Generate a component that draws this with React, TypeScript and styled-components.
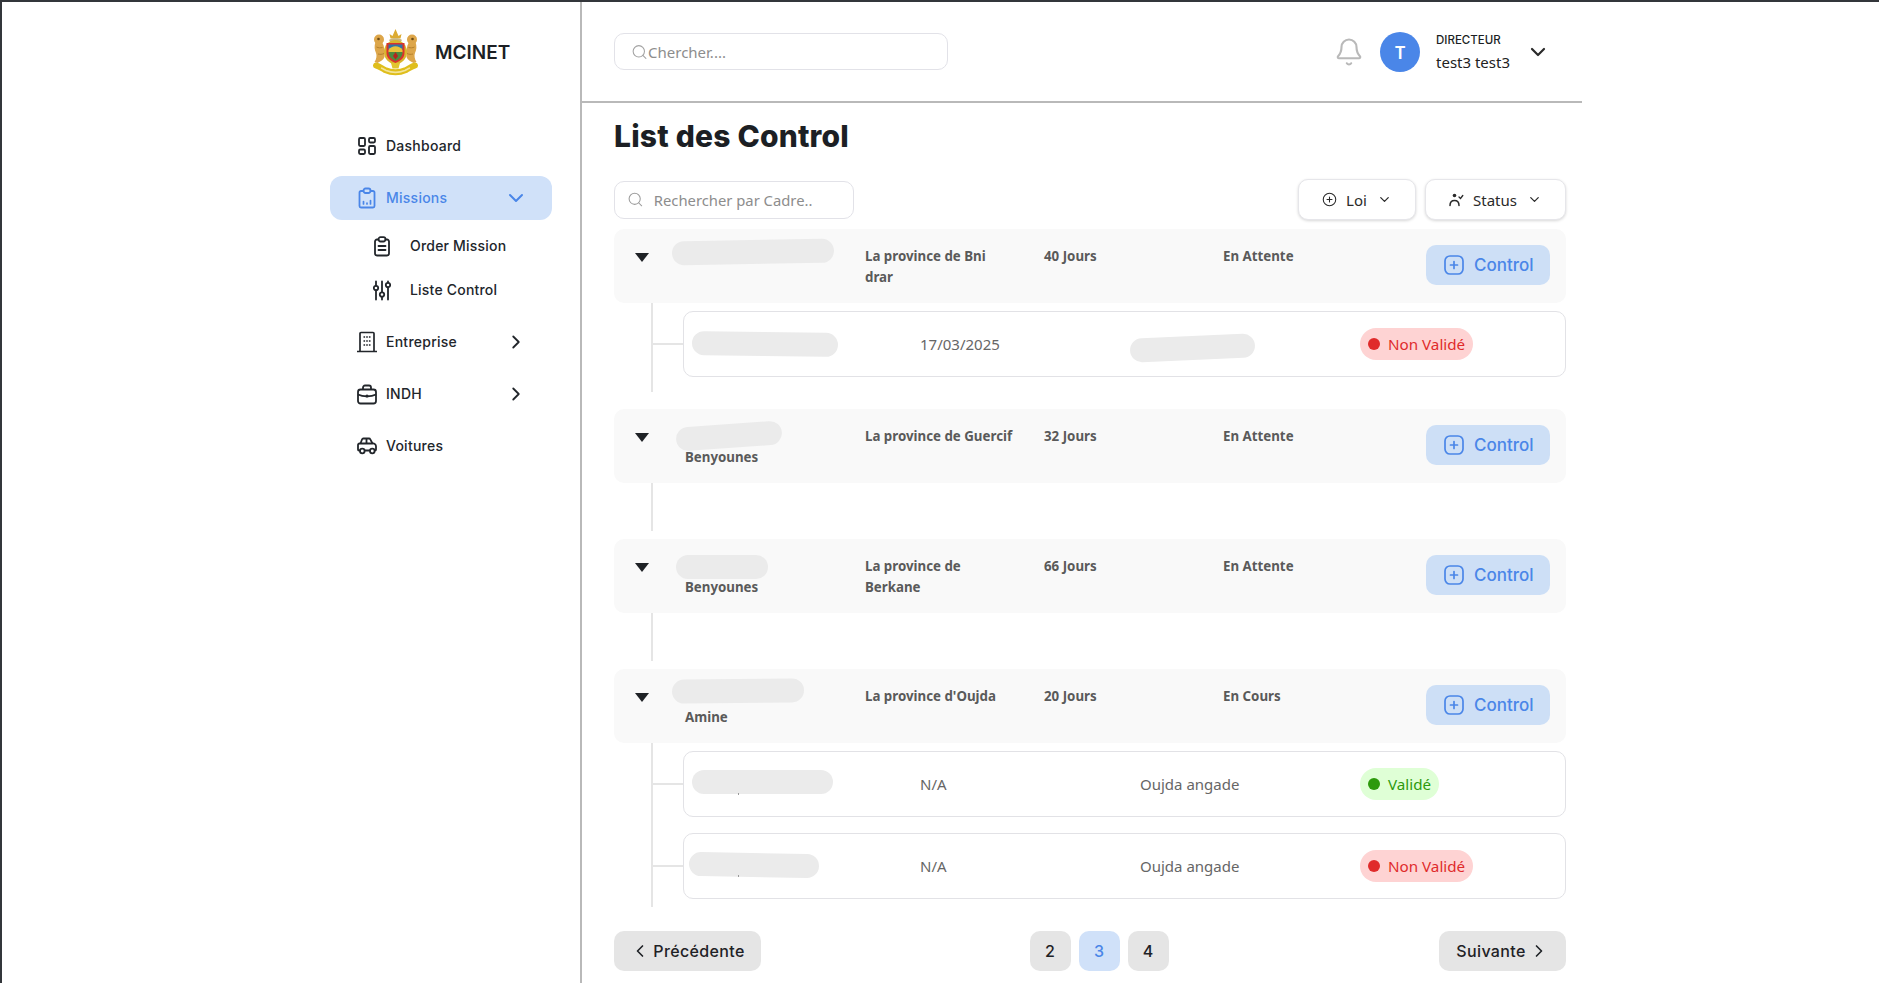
import React from "react";
import styled, { createGlobalStyle } from "styled-components";
import { Bell, ChevronDown, ChevronLeft, ChevronRight, CirclePlus, Search } from "lucide-react";

interface BlurSpot {
  left: number;
  top: number;
  width: number;
  height?: number;
  rotate: number;
}

interface ControlItem {
  blur: BlurSpot;
  date: string;
  place?: string;
  placeBlur?: BlurSpot;
  valid: boolean;
  tick?: boolean;
}

interface MissionItem {
  blur: BlurSpot;
  name?: string;
  province: string;
  days: string;
  status: string;
  tail: number;
  after: number;
  controls: ControlItem[];
}

const missions: MissionItem[] = [
  {
    blur: { left: 0, top: -5, width: 162, rotate: -1 },
    province: "La province de Bni drar",
    days: "40 Jours",
    status: "En Attente",
    tail: 15,
    after: 17,
    controls: [
      {
        blur: { left: 8, top: 20, width: 146, rotate: 0.8 },
        date: "17/03/2025",
        placeBlur: { left: -10, top: 24, width: 125, rotate: -2.5 },
        valid: false,
      },
    ],
  },
  {
    blur: { left: 4, top: -1, width: 106, rotate: -4 },
    name: "Benyounes",
    province: "La province de Guercif",
    days: "32 Jours",
    status: "En Attente",
    tail: 40,
    after: 8,
    controls: [],
  },
  {
    blur: { left: 4, top: 0, width: 92, rotate: 0 },
    name: "Benyounes",
    province: "La province de Berkane",
    days: "66 Jours",
    status: "En Attente",
    tail: 40,
    after: 8,
    controls: [],
  },
  {
    blur: { left: 0, top: -6, width: 132, rotate: -0.6 },
    name: "Amine",
    province: "La province d'Oujda",
    days: "20 Jours",
    status: "En Cours",
    tail: 8,
    after: 24,
    controls: [
      { blur: { left: 8, top: 18, width: 141, rotate: 0 }, date: "N/A", place: "Oujda angade", valid: true, tick: true },
      { blur: { left: 5, top: 19, width: 130, rotate: 1 }, date: "N/A", place: "Oujda angade", valid: false, tick: true },
    ],
  },
];

function Logo() {
  return (
    <svg width="47" height="50" viewBox="0 0 47 50">
      {/* crown */}
      <path d="M18.500 11.500l-1-4.500 3 2 3-7 3 7 3-2-1 4.500z" fill="#dcab32" />
      <path d="M17 13c2-2.500 11-2.500 13 0l-1.500 2.500h-10z" fill="#c9b57f" />
      {/* lions */}
      <g fill="#dda64a">
        <circle cx="7" cy="12.500" r="5" />
        <path d="M3.500 15c-1.500 4-1 8 .5 11 1 2.500 .5 6-1.500 9l3 1c3-1.500 6-3 7-6 .5-5 0-11-2.500-15z" />
        <circle cx="40" cy="12.500" r="5" />
        <path d="M43.500 15c1.500 4 1 8-.5 11-1 2.500-.5 6 1.500 9l-3 1c-3-1.500-6-3-7-6-.5-5 0-11 2.500-15z" />
      </g>
      <path d="M4.500 20c2 1 4 1 6 .5M6 27c2 .5 4 .5 6-.5M42.500 20c-2 1-4 1-6 .5M41 27c-2 .5-4 .5-6-.5" stroke="#b5802c" strokeWidth="1" fill="none" />
      <circle cx="6.500" cy="12" r="1.300" fill="#6b4a15" />
      <circle cx="40.500" cy="12" r="1.300" fill="#6b4a15" />
      {/* shield */}
      <ellipse cx="23.500" cy="25" rx="11.500" ry="12" fill="#d9b52e" />
      <path d="M14.500 16h18v10c0 6-5 8-9 10-4-2-9-4-9-10z" fill="#d9332c" />
      <path d="M16.500 17.500h14v5h-14z" fill="#2f76a8" />
      <path d="M16.500 23c3-5 11-5 14 0v2.500h-14z" fill="#e8c23a" />
      <path d="M16.500 25h14c0 5-3 7-7 9-4-2-7-4-7-9z" fill="#4d8a3f" />
      <path d="M23.500 25l2.500 4-2.500 3.500-2.500-3.500z" fill="#b5221e" />
      {/* ribbon */}
      <path d="M4 38.500c3 .5 6 3 9 4.500 7 3 14 3 21 0 3-1.500 6-4 9-4.500" stroke="#dfbe1c" strokeWidth="6" fill="none" strokeLinecap="round" />
      <path d="M9 41c2 .5 3 1.500 5 2.500 6.500 2.500 12.500 2.500 19 0 2-1 3-2 5-2.500" stroke="#f3e49a" strokeWidth="1.600" fill="none" />
      <path d="M19 36h9l-1.500 5.500h-6z" fill="#e2c52e" />
    </svg>
  );
}

function DashboardIcon() {
  return (
    <svg width="20" height="20" viewBox="0 0 20 20" fill="none" stroke="currentColor" strokeWidth="1.800" strokeLinejoin="round">
      <rect x="2" y="2" width="6" height="8" rx="1.200" />
      <rect x="12" y="2" width="6" height="4.500" rx="1.200" />
      <rect x="2" y="13.500" width="6" height="4.500" rx="1.200" />
      <rect x="12" y="10" width="6" height="8" rx="1.200" />
    </svg>
  );
}

function ClipboardChartIcon() {
  return (
    <svg width="20" height="22" viewBox="0 0 20 22" fill="none" stroke="currentColor" strokeWidth="1.800" strokeLinecap="round">
      <path d="M6.500 4H4a1.500 1.500 0 0 0-1.500 1.500v13.500A1.500 1.500 0 0 0 4 20.500h12a1.500 1.500 0 0 0 1.500-1.500V5.500A1.500 1.500 0 0 0 16 4h-2.500" />
      <rect x="6.500" y="1.500" width="7" height="4.500" rx="2" />
      <path d="M6.500 14.500v2.500M10 16v1M13.500 13.500v3.500" strokeWidth="1.700" />
    </svg>
  );
}

function ClipboardListIcon() {
  return (
    <svg width="18" height="21" viewBox="0 0 18 21" fill="none" stroke="currentColor" strokeWidth="1.800" strokeLinecap="round">
      <path d="M5.500 3.500H4A2 2 0 0 0 2 5.500V17.500A2 2 0 0 0 4 19.500H14A2 2 0 0 0 16 17.500V5.500A2 2 0 0 0 14 3.500H12.500" />
      <rect x="5.500" y="1.200" width="7" height="4.300" rx="2" />
      <path d="M5.500 10H12.500M5.500 14H12.500" />
    </svg>
  );
}

function SlidersIcon() {
  return (
    <svg width="18" height="21" viewBox="0 0 18 21" fill="none" stroke="currentColor" strokeWidth="1.800" strokeLinecap="round">
      <path d="M3 1.500V5.500M3 10.500V19.500M9 1.500V12M9 17V19.500M15 1.500V2.500M15 7.500V19.500" />
      <circle cx="3" cy="8" r="2.200" />
      <circle cx="9" cy="14.500" r="2.200" />
      <circle cx="15" cy="5" r="2.200" />
    </svg>
  );
}

function BuildingIcon() {
  return (
    <svg width="20" height="22" viewBox="0 0 20 22" fill="none" stroke="currentColor" strokeWidth="1.700">
      <path d="M0 20.500H20M3 20.500V2.500A1 1 0 0 1 4 1.500H16A1 1 0 0 1 17 2.500V20.500" />
      <path d="M6.500 6H8.100M9.200 6H10.800M11.900 6H13.500M6.500 10H8.100M9.200 10H10.800M11.900 10H13.500M6.500 14H8.100M9.200 14H10.800M11.900 14H13.500" strokeWidth="1.600" />
    </svg>
  );
}

function BriefcaseIcon() {
  return (
    <svg width="20" height="21" viewBox="0 0 20 21" fill="none" stroke="currentColor" strokeWidth="1.800" strokeLinejoin="round">
      <rect x="1" y="5.500" width="18" height="14" rx="2.500" />
      <path d="M6 5.500V3.500A2 2 0 0 1 8 1.500H12A2 2 0 0 1 14 3.500V5.500" />
      <path d="M1 10.500C6 13 14 13 19 10.500" />
      <circle cx="10" cy="12" r="0.700" fill="currentColor" />
    </svg>
  );
}

function CarIcon() {
  return (
    <svg width="20" height="18" viewBox="0 0 20 18" fill="none" stroke="currentColor" strokeWidth="1.800" strokeLinejoin="round">
      <path d="M3 13.500H2A1 1 0 0 1 1 12.500V8A1.500 1.500 0 0 1 2.500 6.500H15.500A3 3 0 0 1 19 9.500V12.500A1 1 0 0 1 18 13.500H17.500" />
      <path d="M7.500 13.500H13M3.500 6.500L5 2.500A1.500 1.500 0 0 1 6.500 1.500H12A1.500 1.500 0 0 1 13.300 2.300L15.500 6.500M9.500 1.500V6.500" />
      <circle cx="5.300" cy="14" r="2.300" />
      <circle cx="15.300" cy="14" r="2.300" />
    </svg>
  );
}

function StatusIcon() {
  return (
    <svg width="15" height="15" viewBox="0 0 15 15" fill="none" stroke="#2a2a2a" strokeWidth="1.500" strokeLinecap="round">
      <circle cx="5.500" cy="3.500" r="1.800" fill="#2a2a2a" stroke="none" />
      <path d="M1 13.500C1 10 3 8.500 5.500 8.500C8 8.500 10 10 10 13.500" />
      <path d="M10 5L11.500 6.500L13.800 3.500" strokeWidth="1.300" />
    </svg>
  );
}

function RoundedPlusIcon() {
  return (
    <svg width="20" height="20" viewBox="0 0 20 20" fill="none" stroke="currentColor" strokeWidth="1.700" strokeLinecap="round">
      <rect x="1" y="1" width="18" height="18" rx="5" />
      <path d="M10 6.500V13.500M6.500 10H13.500" />
    </svg>
  );
}

export default function App() {
  return (
    <>
      <GlobalStyle />
      <Page>
        <Sidebar>
          <Brand>
            <Logo />
            <BrandName>MCINET</BrandName>
          </Brand>
          <Nav>
            <NavRow>
              <NavIcon><DashboardIcon /></NavIcon>
              <NavLabel>Dashboard</NavLabel>
            </NavRow>
            <NavRow $active>
              <NavIcon><ClipboardChartIcon /></NavIcon>
              <NavLabel>Missions</NavLabel>
              <NavChevron $pull={1}><ChevronDown size={24} strokeWidth={2} /></NavChevron>
            </NavRow>
            <SubNav>
              <SubRow>
                <SubIcon><ClipboardListIcon /></SubIcon>
                <NavLabel>Order Mission</NavLabel>
              </SubRow>
              <SubRow>
                <SubIcon><SlidersIcon /></SubIcon>
                <NavLabel>Liste Control</NavLabel>
              </SubRow>
            </SubNav>
            <NavRow>
              <NavIcon><BuildingIcon /></NavIcon>
              <NavLabel>Entreprise</NavLabel>
              <NavChevron><ChevronRight size={22} strokeWidth={2} /></NavChevron>
            </NavRow>
            <NavRow>
              <NavIcon><BriefcaseIcon /></NavIcon>
              <NavLabel>INDH</NavLabel>
              <NavChevron><ChevronRight size={22} strokeWidth={2} /></NavChevron>
            </NavRow>
            <NavRow>
              <NavIcon><CarIcon /></NavIcon>
              <NavLabel>Voitures</NavLabel>
            </NavRow>
          </Nav>
        </Sidebar>

        <Content>
          <Header>
            <TopSearch>
              <Search size={18} strokeWidth={1.5} color="#a3a3a3" />
              <input placeholder="Chercher...." />
            </TopSearch>
            <UserArea>
              <BellBox><Bell size={30} strokeWidth={1.700} color="#b9b9b9" /></BellBox>
              <Avatar>T</Avatar>
              <UserText>
                <UserRole>DIRECTEUR</UserRole>
                <UserName>test3 test3</UserName>
              </UserText>
              <ChevronDown size={24} strokeWidth={2.200} color="#2a2a2a" />
            </UserArea>
          </Header>

          <Main>
            <Title>List des Control</Title>
            <FilterBar>
              <CadreSearch>
                <Search size={19} strokeWidth={1.500} color="#9b9b9b" />
                <input placeholder="Rechercher par Cadre.." />
              </CadreSearch>
              <Filters>
                <FilterButton $width={118}>
                  <CirclePlus size={15} strokeWidth={1.700} />
                  <span>Loi</span>
                  <ChevronDown size={15} strokeWidth={2} />
                </FilterButton>
                <FilterButton $width={141}>
                  <StatusIcon />
                  <span>Status</span>
                  <ChevronDown size={15} strokeWidth={2} />
                </FilterButton>
              </Filters>
            </FilterBar>

            {missions.map((mission) => (
              <section key={mission.province}>
                <MissionRow>
                  <Toggle />
                  <NameCell>
                    <BlurPill $spot={mission.blur} />
                    {mission.name && <CadreName>{mission.name}</CadreName>}
                  </NameCell>
                  <Cell>{mission.province}</Cell>
                  <Cell>{mission.days}</Cell>
                  <Cell>{mission.status}</Cell>
                  <ControlButton>
                    <RoundedPlusIcon />
                    Control
                  </ControlButton>
                </MissionRow>
                <ControlList $tail={mission.tail} $after={mission.after}>
                  {mission.controls.map((control, i) => (
                    <ControlCard key={i}>
                      <BlurCell>
                        <BlurPill $spot={control.blur} />
                        {control.tick && <Tick />}
                      </BlurCell>
                      <span>{control.date}</span>
                      <BlurCell>
                        {control.place}
                        {control.placeBlur && <BlurPill $spot={control.placeBlur} />}
                      </BlurCell>
                      <Badge $valid={control.valid}>
                        <Dot $valid={control.valid} />
                        {control.valid ? "Validé" : "Non Validé"}
                      </Badge>
                    </ControlCard>
                  ))}
                </ControlList>
              </section>
            ))}

            <Pagination>
              <PageButton $width={147}>
                <ChevronLeft size={20} strokeWidth={2} />
                Précédente
              </PageButton>
              <Pages>
                <PageNumber>2</PageNumber>
                <PageNumber $current>3</PageNumber>
                <PageNumber>4</PageNumber>
              </Pages>
              <PageButton $width={127}>
                Suivante
                <ChevronRight size={20} strokeWidth={2} />
              </PageButton>
            </Pagination>
          </Main>
        </Content>
      </Page>
    </>
  );
}

const GlobalStyle = createGlobalStyle`
  html, body {
    margin: 0;
    height: 100%;
    overflow: hidden;
    background: #fff;
  }
  * {
    box-sizing: border-box;
  }
  body {
    font-family: "Noto Sans", "Open Sans", sans-serif;
    color: #222;
  }
  input {
    border: none;
    outline: none;
    background: none;
    font: inherit;
    width: 100%;
    padding: 0;
  }
`;

const Page = styled.div`
  display: flex;
  height: 983px;
  border-top: 2px solid #33363b;
  border-left: 2px solid #33363b;
`;

const Sidebar = styled.aside`
  width: 580px;
  flex-shrink: 0;
  padding-left: 328px;
  border-right: 2px solid #b9b9b9;
  font-family: Inter, sans-serif;
`;

const Brand = styled.div`
  display: flex;
  align-items: center;
  gap: 16px;
  height: 100px;
  margin-left: 42px;
`;

const BrandName = styled.span`
  font-size: 19px;
  font-weight: 600;
  color: #1c1f24;
`;

const Nav = styled.nav`
  width: 222px;
  margin-top: 22px;
  display: flex;
  flex-direction: column;
  gap: 8px;
`;

const NavRow = styled.div<{ $active?: boolean }>`
  display: flex;
  align-items: center;
  height: 44px;
  gap: 9px;
  padding: 0 25px 0 26px;
  border-radius: 12px;
  font-size: 14px;
  font-weight: 500;
  letter-spacing: 0.25px;
  background: ${(p) => (p.$active ? "#d0e1f9" : "transparent")};
  color: ${(p) => (p.$active ? "#4a86e8" : "#22262b")};
`;

const NavIcon = styled.span`
  display: flex;
  justify-content: center;
  width: 21px;
`;

const NavLabel = styled.span`
  margin-top: -2px;
`;

const NavChevron = styled.span<{ $pull?: number }>`
  display: flex;
  margin-left: auto;
  margin-right: ${(p) => -(p.$pull ?? 0)}px;
`;

const SubNav = styled.div`
  display: flex;
  flex-direction: column;
  margin-top: -4px;
`;

const SubRow = styled.div`
  display: flex;
  align-items: center;
  height: 44px;
  gap: 19px;
  padding-left: 43px;
  font-size: 14px;
  font-weight: 500;
  letter-spacing: 0.2px;
  color: #22262b;
`;

const SubIcon = styled.span`
  display: flex;
  justify-content: center;
  width: 18px;
`;

const Content = styled.div`
  width: 1000px;
  flex-shrink: 0;
`;

const Header = styled.header`
  display: flex;
  align-items: center;
  justify-content: space-between;
  height: 101px;
  padding: 0 32px;
  border-bottom: 2px solid #b9b9b9;
`;

const TopSearch = styled.label`
  display: flex;
  align-items: center;
  gap: 0;
  width: 334px;
  height: 37px;
  padding-left: 16px;
  border: 1.5px solid #e2e2e8;
  border-radius: 10px;
  font-size: 15px;

  input::placeholder {
    color: #8d8d8d;
    opacity: 1;
  }
`;

const UserArea = styled.div`
  display: flex;
  align-items: center;
`;

const BellBox = styled.span`
  display: flex;
  margin-right: 16px;
`;

const Avatar = styled.div`
  display: flex;
  align-items: center;
  justify-content: center;
  width: 40px;
  height: 40px;
  border-radius: 50%;
  background: #4a86e8;
  color: #fff;
  font-size: 18px;
  font-weight: 600;
`;

const UserText = styled.div`
  display: flex;
  flex-direction: column;
  gap: 4px;
  width: 88px;
  margin-left: 16px;
  margin-right: 2px;
`;

const UserRole = styled.span`
  font-family: Inter, sans-serif;
  font-size: 11.5px;
  line-height: 16px;
  font-weight: 500;
  color: #1c1f24;
`;

const UserName = styled.span`
  font-size: 15px;
  line-height: 20px;
`;

const Main = styled.main`
  padding: 0 16px 0 32px;
`;

const Title = styled.h1`
  margin: 12px 0 0;
  font-family: Inter, sans-serif;
  font-size: 30px;
  line-height: 42px;
  font-weight: 800;
  letter-spacing: 0.2px;
  color: #1c1f24;
`;

const FilterBar = styled.div`
  display: flex;
  align-items: center;
  justify-content: space-between;
  margin: 22px 0 9px;
`;

const CadreSearch = styled.label`
  display: flex;
  align-items: center;
  gap: 10px;
  width: 240px;
  height: 38px;
  padding-left: 12px;
  border: 1.5px solid #e2e2e8;
  border-radius: 10px;
  font-size: 14.8px;

  input::placeholder {
    color: #8d8d8d;
    opacity: 1;
  }
`;

const Filters = styled.div`
  display: flex;
  gap: 9px;
`;

const FilterButton = styled.button<{ $width: number }>`
  display: flex;
  align-items: center;
  justify-content: center;
  gap: 9px;
  width: ${(p) => p.$width}px;
  height: 41px;
  border: 1.5px solid #e6e6ea;
  border-radius: 10px;
  background: #fff;
  box-shadow: 0 1px 3px rgba(0, 0, 0, 0.16);
  font-family: inherit;
  font-size: 15px;
  color: #2a2a2a;

  span {
    margin-right: 1px;
  }
`;

const MissionRow = styled.div`
  display: grid;
  grid-template-columns: 58px 193px 179px 179px 1fr auto;
  align-items: start;
  height: 74px;
  padding: 16px 16px 0 0;
  border-radius: 10px;
  background: #f9f9f9;
`;

const Toggle = styled.span`
  justify-self: start;
  width: 0;
  height: 0;
  margin: 8px 0 0 21px;
  border-left: 7px solid transparent;
  border-right: 7px solid transparent;
  border-top: 9px solid #1f2226;
`;

const NameCell = styled.div`
  position: relative;
  height: 42px;
`;

const BlurPill = styled.span<{ $spot: BlurSpot }>`
  position: absolute;
  left: ${(p) => p.$spot.left}px;
  top: ${(p) => p.$spot.top}px;
  width: ${(p) => p.$spot.width}px;
  height: ${(p) => p.$spot.height ?? 24}px;
  border-radius: 12px;
  background: #ebebeb;
  transform: rotate(${(p) => p.$spot.rotate}deg);
`;

const CadreName = styled.span`
  display: block;
  padding: 22px 0 0 13px;
  font-size: 13.3px;
  line-height: 21px;
  font-weight: 700;
  color: #5a5a5a;
`;

const Cell = styled.span`
  margin-top: 1px;
  padding-right: 28px;
  font-size: 13.3px;
  line-height: 21px;
  font-weight: 700;
  color: #5a5a5a;
`;

const ControlButton = styled.button`
  display: flex;
  align-items: center;
  gap: 10px;
  width: 124px;
  height: 40px;
  padding: 0 0 0 18px;
  border: none;
  border-radius: 10px;
  background: #cddff6;
  color: #4a86e8;
  font-family: Inter, sans-serif;
  font-size: 17px;
  font-weight: 500;
`;

const ControlList = styled.div<{ $tail: number; $after: number }>`
  display: flex;
  flex-direction: column;
  gap: 16px;
  margin: 0 0 ${(p) => p.$after}px 37px;
  padding: 8px 0 ${(p) => p.$tail}px 30px;
  border-left: 2px solid #e5e5e5;
`;

const ControlCard = styled.div`
  position: relative;
  display: grid;
  grid-template-columns: 236px 220px 220px 1fr;
  align-items: center;
  height: 66px;
  border: 1.5px solid #e2e2e6;
  border-radius: 10px;
  font-size: 15px;
  color: #666;

  &::before {
    content: "";
    position: absolute;
    left: -31.5px;
    top: 50%;
    width: 30px;
    height: 2px;
    margin-top: -1px;
    background: #e5e5e5;
  }
`;

const BlurCell = styled.div`
  position: relative;
  align-self: stretch;
  display: flex;
  align-items: center;
`;

const Tick = styled.span`
  position: absolute;
  left: 54px;
  top: 41px;
  width: 1px;
  height: 2px;
  background: #999;
`;

const Badge = styled.span<{ $valid: boolean }>`
  justify-self: start;
  display: flex;
  align-items: center;
  gap: 8px;
  height: 32px;
  padding: 0 8px 0 8px;
  border-radius: 16px;
  font-size: 15.2px;
  background: ${(p) => (p.$valid ? "#dfffd6" : "#fed3d3")};
  color: ${(p) => (p.$valid ? "#2d9a0c" : "#e02b2b")};
`;

const Dot = styled.span<{ $valid: boolean }>`
  width: 12px;
  height: 12px;
  border-radius: 50%;
  background: ${(p) => (p.$valid ? "#2d9a0c" : "#e02b2b")};
`;

const Pagination = styled.nav`
  display: flex;
  align-items: center;
  justify-content: space-between;
`;

const PageButton = styled.button<{ $width: number }>`
  display: flex;
  align-items: center;
  justify-content: center;
  gap: 3px;
  width: ${(p) => p.$width}px;
  height: 40px;
  padding: 0;
  border: none;
  border-radius: 10px;
  background: #e5e5e5;
  color: #1f2226;
  font-family: Inter, sans-serif;
  font-size: 16px;
  font-weight: 500;
  letter-spacing: 0.35px;
`;

const Pages = styled.div`
  display: flex;
  gap: 8px;
  margin-left: -2px;
`;

const PageNumber = styled.button<{ $current?: boolean }>`
  width: 41px;
  height: 40px;
  border: none;
  border-radius: 10px;
  background: ${(p) => (p.$current ? "#d0e1f9" : "#e5e5e5")};
  color: ${(p) => (p.$current ? "#4a86e8" : "#1f2226")};
  font-family: Inter, sans-serif;
  font-size: 16px;
  font-weight: 500;
`;
